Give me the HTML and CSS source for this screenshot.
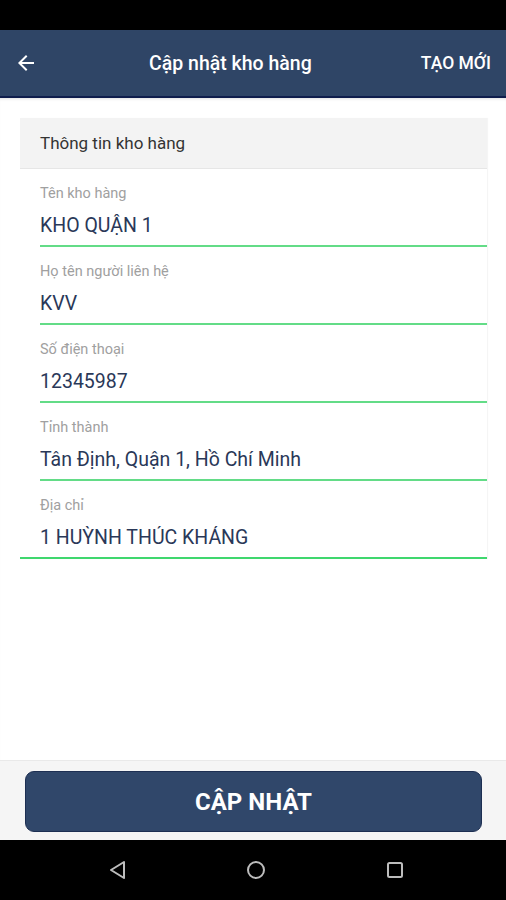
FILE: index.html
```html
<!DOCTYPE html>
<html lang="vi">
<head>
    <meta charset="UTF-8">
    <meta name="viewport" content="width=device-width, initial-scale=1.0">
    <title>Cập nhật kho hàng</title>
    <link rel="stylesheet" href="styles.css">
</head>
<body>
    <div class="screen">
        <div class="status-bar"></div>
        <header class="app-bar">
            <button class="back-btn" type="button" aria-label="Quay lại">
                <svg width="24" height="24" viewBox="0 0 24 24">
                    <path d="M20 11H7.83l5.59-5.59L12 4l-8 8 8 8 1.41-1.41L7.83 13H20v-2z" fill="#fff"/>
                </svg>
            </button>
            <h1 class="app-title">Cập nhật kho hàng</h1>
            <a class="app-action" href="#">TẠO MỚI</a>
        </header>

        <main class="content">
            <form class="card" id="warehouseForm">
                <div class="card-header">Thông tin kho hàng</div>
                <div class="field">
                    <label for="name">Tên kho hàng</label>
                    <input type="text" id="name" value="KHO QUẬN 1">
                </div>
                <div class="field">
                    <label for="contact">Họ tên người liên hệ</label>
                    <input type="text" id="contact" value="KVV">
                </div>
                <div class="field">
                    <label for="phone">Số điện thoại</label>
                    <input type="text" id="phone" value="12345987">
                </div>
                <div class="field">
                    <label for="province">Tỉnh thành</label>
                    <input type="text" id="province" value="Tân Định, Quận 1, Hồ Chí Minh">
                </div>
                <div class="field field-last">
                    <label for="address">Địa chỉ</label>
                    <input type="text" id="address" value="1 HUỲNH THÚC KHÁNG">
                </div>
            </form>
        </main>

        <footer class="footer">
            <button class="submit-btn" type="button">CẬP NHẬT</button>
        </footer>

        <nav class="nav-bar">
            <svg width="20" height="22" viewBox="0 0 20 22">
                <path d="M17 3 L4 11 L17 19 Z" fill="none" stroke="#bdbdbd" stroke-width="2" stroke-linejoin="round"/>
            </svg>
            <svg width="22" height="22" viewBox="0 0 22 22">
                <circle cx="11" cy="11" r="8" fill="none" stroke="#bdbdbd" stroke-width="2"/>
            </svg>
            <svg width="20" height="20" viewBox="0 0 20 20">
                <rect x="3" y="3" width="14" height="14" rx="1.5" fill="none" stroke="#bdbdbd" stroke-width="2"/>
            </svg>
        </nav>
    </div>
</body>
</html>
```

FILE: styles.css
```css
* {
    box-sizing: border-box;
}
body {
    margin: 0;
    padding: 0;
    font-family: Roboto, "Liberation Sans", Arial, sans-serif;
    background-color: #fff;
}
.screen {
    display: flex;
    flex-direction: column;
    height: 900px;
}
.status-bar {
    height: 30px;
    flex-shrink: 0;
    background-color: #000;
}
.app-bar {
    height: 68px;
    flex-shrink: 0;
    display: flex;
    align-items: center;
    background-color: #2f4566;
    border-bottom: 2px solid #0f1d4c;
    padding: 0 15px 0 12px;
}
.back-btn {
    width: 28px;
    height: 28px;
    padding: 0;
    border: none;
    background: none;
    display: flex;
    align-items: center;
    justify-content: center;
}
.app-title {
    flex: 1;
    margin: 0;
    text-align: center;
    font-size: 19.5px;
    font-weight: 500;
    color: #fff;
}
.app-action {
    color: #fff;
    text-decoration: none;
    font-size: 17.5px;
    font-weight: 500;
}
.content {
    flex: 1;
    padding: 20px 19px 0 20px;
    box-shadow: inset 0 3px 3px -2px rgba(0, 0, 0, 0.12);
}
.card {
    background-color: #fff;
    box-shadow: 1px 0 1px rgba(0, 0, 0, 0.04);
}
.card-header {
    height: 51px;
    display: flex;
    align-items: center;
    padding-left: 20px;
    background-color: #f3f3f3;
    border-bottom: 1px solid #e6e6e6;
    font-size: 17px;
    color: #333;
}
.field {
    margin-left: 20px;
    padding-top: 16px;
    padding-bottom: 7px;
    border-bottom: 2px solid #63dc87;
    display: flex;
    flex-direction: column;
}
.field-last {
    margin-left: 0;
    padding-left: 20px;
    border-bottom-color: #3fd76e;
}
.field label {
    font-size: 14.5px;
    line-height: 18px;
    color: #a0a0a0;
}
.field input {
    margin-top: 9px;
    height: 26px;
    padding: 0;
    border: none;
    outline: none;
    font-family: inherit;
    font-size: 19.5px;
    color: #2a3858;
    background: transparent;
}
.footer {
    height: 80px;
    flex-shrink: 0;
    background-color: #f5f5f5;
    border-top: 1px solid #e9e9e9;
    padding: 10px 24px 0 25px;
}
.submit-btn {
    width: 100%;
    height: 61px;
    border: 1px solid #1d2f52;
    border-radius: 9px;
    background-color: #30476a;
    color: #fff;
    font-family: inherit;
    font-size: 24px;
    font-weight: 700;
    cursor: pointer;
}
.nav-bar {
    height: 60px;
    flex-shrink: 0;
    background-color: #000;
    display: flex;
    align-items: center;
    justify-content: center;
    gap: 118px;
    padding-left: 6px;
}
```
